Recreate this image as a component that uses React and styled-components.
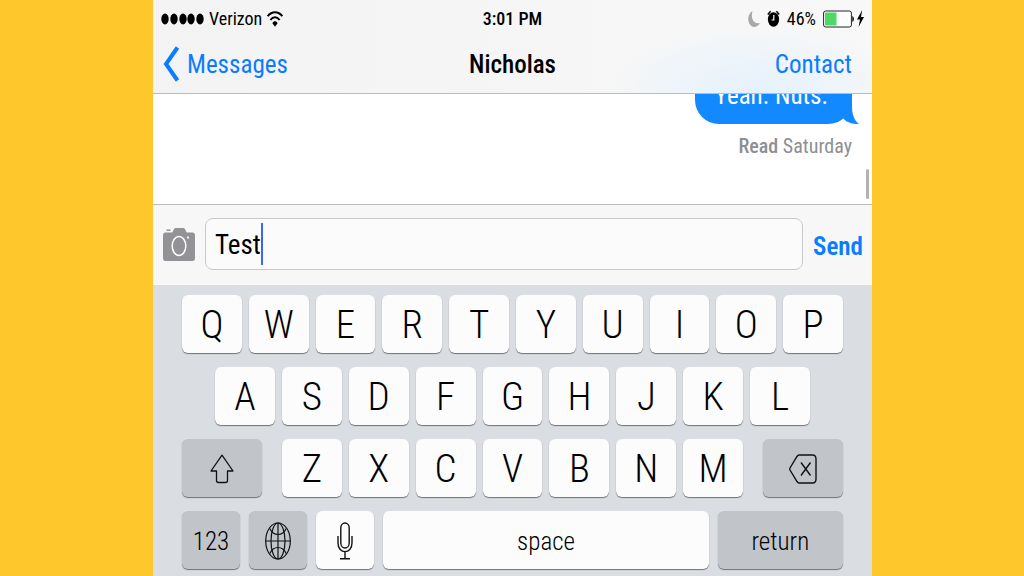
import { useState } from 'react';
import styled, { createGlobalStyle } from 'styled-components';

const ROW_ONE = ['Q', 'W', 'E', 'R', 'T', 'Y', 'U', 'I', 'O', 'P'];
const ROW_TWO = ['A', 'S', 'D', 'F', 'G', 'H', 'J', 'K', 'L'];
const ROW_THREE = ['Z', 'X', 'C', 'V', 'B', 'N', 'M'];

const App = () => {
  const [message, setMessage] = useState('Test');

  const typeLetter = (letter) => setMessage(message + letter);

  return (
    <Page>
      <GlobalStyle />
      <Phone>
        <Header>
          <StatusBar>
            <StatusGroup>
              <SignalDots />
              <span>Verizon</span>
              <WifiIcon />
            </StatusGroup>
            <Clock>3:01 PM</Clock>
            <StatusGroup $end>
              <MoonIcon />
              <AlarmIcon />
              <span>46%</span>
              <Power>
                <BatteryIcon />
                <BoltIcon />
              </Power>
            </StatusGroup>
          </StatusBar>
          <NavBar>
            <BackLink href="#messages">
              <ChevronIcon />
              Messages
            </BackLink>
            <Title>Nicholas</Title>
            <ContactLink href="#contact">Contact</ContactLink>
          </NavBar>
        </Header>

        <MessageList>
          <Bubble>
            Yeah. Nuts.
            <BubbleTail viewBox="0 0 22 24">
              <path d="M0 0H15V6C15 14 17 20 22 24C14 24 9 22 6 18Q3 21 0 22Z" fill="#1289fe" />
            </BubbleTail>
          </Bubble>
          <Receipt>
            <b>Read</b> Saturday
          </Receipt>
          <ScrollThumb />
        </MessageList>

        <Composer onSubmit={(e) => e.preventDefault()}>
          <IconButton type="button" aria-label="Camera">
            <CameraIcon />
          </IconButton>
          <Field>
            <MessageInput
              aria-label="Message"
              value={message}
              onChange={(e) => setMessage(e.target.value)}
            />
            <Caret />
          </Field>
          <SendButton type="submit">Send</SendButton>
        </Composer>

        <Keyboard>
          <KeyRow>
            {ROW_ONE.map((letter) => (
              <Key key={letter} onClick={() => typeLetter(letter)}>
                {letter}
              </Key>
            ))}
          </KeyRow>
          <KeyRow $inset>
            {ROW_TWO.map((letter) => (
              <Key key={letter} onClick={() => typeLetter(letter)}>
                {letter}
              </Key>
            ))}
          </KeyRow>
          <ShiftRow>
            <Key $dark aria-label="Shift">
              <ShiftIcon />
            </Key>
            <KeyRow>
              {ROW_THREE.map((letter) => (
                <Key key={letter} onClick={() => typeLetter(letter)}>
                  {letter}
                </Key>
              ))}
            </KeyRow>
            <Key
              $dark
              aria-label="Delete"
              onClick={() => setMessage(message.slice(0, -1))}
            >
              <DeleteIcon />
            </Key>
          </ShiftRow>
          <BottomRow>
            <Key $dark $small>
              123
            </Key>
            <Key $dark aria-label="Next keyboard">
              <GlobeIcon />
            </Key>
            <Key aria-label="Dictate">
              <MicIcon />
            </Key>
            <Key $small onClick={() => typeLetter(' ')}>
              space
            </Key>
            <Key $dark $small>
              return
            </Key>
          </BottomRow>
        </Keyboard>
      </Phone>
    </Page>
  );
};

const SignalDots = () => (
  <svg width="43" height="12" viewBox="0 0 43 12">
    {[4, 13, 22, 30, 39].map((x) => (
      <ellipse key={x} cx={x} cy="6" rx="3.7" ry="5.4" fill="#000" />
    ))}
  </svg>
);

const WifiIcon = () => (
  <svg width="16" height="16" viewBox="0 0 16 16" fill="none" stroke="#000" strokeWidth="2">
    <path d="M0.7 5.2C4.8 0 11.2 0 15.3 5.2" />
    <path d="M3.4 9C6.1 5.4 9.9 5.4 12.6 9" />
    <path d="M5.4 12.2C6.8 9.6 9.2 9.6 10.6 12.2L8 15.8Z" fill="#000" stroke="none" />
  </svg>
);

const MoonIcon = () => (
  <svg width="12" height="18" viewBox="0 0 12 18">
    <path d="M4.5 1C-1 4 -1 13 3.5 16C6.5 18 10 16.5 12 13C5.5 14.5 2.5 8 4.5 1Z" fill="#a9a9ab" />
  </svg>
);

const AlarmIcon = () => (
  <svg width="13" height="18" viewBox="0 0 13 18">
    <ellipse cx="6.5" cy="9.5" rx="5.6" ry="7.3" fill="#000" />
    <path d="M0.8 4.5L3.6 1.3M12.2 4.5L9.4 1.3" stroke="#000" strokeWidth="1.4" />
    <path d="M6.8 5V10H4.5" fill="none" stroke="#fff" strokeWidth="1.2" />
  </svg>
);

const BatteryIcon = () => (
  <svg width="31" height="18" viewBox="0 0 31 18">
    <rect x="0.6" y="1" width="27.8" height="16" rx="2" fill="#fff" stroke="#222" strokeWidth="1" />
    <rect x="2" y="2.5" width="11.5" height="13" fill="#4cd964" />
    <path d="M29.3 6C31.4 7 31.4 11 29.3 12Z" fill="#000" />
  </svg>
);

const BoltIcon = () => (
  <svg width="7" height="17" viewBox="0 0 7 17">
    <path d="M5.2 0L0 9.5H3L1.6 17L7 7H4Z" fill="#000" />
  </svg>
);

const ChevronIcon = () => (
  <svg width="17" height="36" viewBox="0 0 17 36">
    <path d="M14.5 1.5L3 18L14.5 34.5" fill="none" stroke="#0a7cff" strokeWidth="4" />
  </svg>
);

const CameraIcon = () => (
  <svg width="32" height="34" viewBox="0 0 32 34">
    <path
      d="M2.5 5.5H9C10.5 5 10.5 1 12.5 1H20.5C22.5 1 22.5 5 24 5.5H29.5Q32 5.5 32 8.5V31Q32 34 29.5 34H2.5Q0 34 0 31V8.5Q0 5.5 2.5 5.5Z"
      fill="#929297"
    />
    <path d="M3.5 3.2H7.5" stroke="#929297" strokeWidth="1.5" />
    <ellipse cx="16" cy="19" rx="6.8" ry="9.5" fill="none" stroke="#fff" strokeWidth="1.5" />
    <ellipse cx="25" cy="10.5" rx="0.9" ry="1.2" fill="#fff" />
  </svg>
);

const ShiftIcon = () => (
  <svg width="24" height="30" viewBox="0 0 24 30">
    <path
      d="M12 1.2L23 17H17.5V26.5Q17.5 28.5 15.5 28.5H8.5Q6.5 28.5 6.5 26.5V17H1Z"
      fill="none"
      stroke="#111"
      strokeWidth="1.3"
      strokeLinejoin="round"
    />
  </svg>
);

const DeleteIcon = () => (
  <svg width="28" height="30" viewBox="0 0 28 30" fill="none" stroke="#111" strokeWidth="1.4">
    <path d="M10 1H23.5Q27 1 27 5V25Q27 29 23.5 29H10Q9 29 8 27.5L1 16Q0.5 15 1 14L8 2.5Q9 1 10 1Z" />
    <path d="M12 8.5L21.5 21.5M21.5 8.5L12 21.5" />
  </svg>
);

const GlobeIcon = () => (
  <svg width="26" height="38" viewBox="0 0 26 38" fill="none" stroke="#111" strokeWidth="1.2">
    <ellipse cx="13" cy="19" rx="12.3" ry="18" />
    <ellipse cx="13" cy="19" rx="7" ry="18" />
    <path d="M13 1V37M0.7 19H25.3" />
    <path d="M4.8 6.5C8.5 14.5 17.5 14.5 21.2 6.5" />
    <path d="M4.8 31.5C8.5 23.5 17.5 23.5 21.2 31.5" />
  </svg>
);

const MicIcon = () => (
  <svg width="16" height="38" viewBox="0 0 16 38" fill="none" stroke="#111" strokeWidth="1.4">
    <rect x="3.8" y="1" width="8.4" height="25" rx="4.2" ry="5" />
    <path d="M1 14V21C1 32.5 15 32.5 15 21V14" />
    <path d="M8 29.5V36.5M3 36.8H13" />
  </svg>
);

const GlobalStyle = createGlobalStyle`
  * {
    box-sizing: border-box;
  }

  body {
    margin: 0;
    background-color: #fec72c;
    font-family: 'Roboto Condensed', 'Liberation Sans Narrow', 'Liberation Sans', sans-serif;
  }

  svg {
    display: block;
    flex-shrink: 0;
  }

  button,
  input {
    margin: 0;
    padding: 0;
    border: none;
    background: none;
    font-family: inherit;
  }
`;

const Page = styled.div`
  display: grid;
  grid-template-columns: 153fr 719fr 152fr;
  min-height: 100vh;
  background-color: #fec72c;
`;

const Phone = styled.main`
  display: flex;
  flex-direction: column;
  grid-column: 2;
  min-width: 0;
  background-color: #fff;
`;

const Header = styled.header`
  border-bottom: 1px solid #bcbcbe;
  background: radial-gradient(ellipse 150px 70px at 84% 100%, #e4f1fd, rgba(228, 241, 253, 0)),
    linear-gradient(90deg, #f3f3f3, #f8f8f8);
`;

const StatusBar = styled.div`
  display: grid;
  grid-template-columns: 1fr auto 1fr;
  align-items: center;
  height: 37px;
  padding: 0 8px;
  font-size: 18px;
`;

const StatusGroup = styled.div`
  display: flex;
  align-items: center;
  justify-content: ${({ $end }) => ($end ? 'flex-end' : 'flex-start')};
  gap: ${({ $end }) => ($end ? '7px' : '5px')};
`;

const Power = styled.div`
  display: flex;
  align-items: center;
  gap: 3px;
`;

const Clock = styled.time`
  font-weight: 500;
`;

const NavBar = styled.nav`
  display: grid;
  grid-template-columns: 1fr auto 1fr;
  align-items: center;
  height: 56px;
  padding: 0 10px 2px;
  font-size: 25px;
`;

const BackLink = styled.a`
  display: flex;
  align-items: center;
  gap: 7px;
  color: #0a7cff;
  text-decoration: none;
`;

const Title = styled.h1`
  margin: 0;
  font-size: 25px;
  font-weight: 500;
`;

const ContactLink = styled.a`
  padding-right: 10px;
  color: #0a7cff;
  text-align: right;
  text-decoration: none;
`;

const MessageList = styled.section`
  position: relative;
  display: flex;
  flex-direction: column;
  align-items: flex-end;
  justify-content: flex-end;
  height: 110px;
  padding: 0 20px 45px;
  overflow: hidden;
`;

const Bubble = styled.div`
  position: relative;
  flex-shrink: 0;
  margin-bottom: 9px;
  padding: 14px 24px 12px 20px;
  border-radius: 24px;
  background-color: #1289fe;
  color: #fff;
  font-size: 25px;
  line-height: 32px;
`;

const BubbleTail = styled.svg`
  position: absolute;
  right: -7px;
  bottom: 0;
  width: 22px;
  height: 24px;
`;

const Receipt = styled.p`
  margin: 0;
  color: #8e8e93;
  font-size: 20px;
  line-height: 26px;

  b {
    font-weight: 500;
  }
`;

const ScrollThumb = styled.div`
  position: absolute;
  right: 3px;
  bottom: 5px;
  width: 3px;
  height: 30px;
  border-radius: 2px;
  background-color: #b2b2b2;
`;

const Composer = styled.form`
  display: flex;
  align-items: center;
  gap: 10px;
  height: 81px;
  padding: 0 9px 2px 10px;
  border-top: 1px solid #bcbcbe;
  background-color: #f7f7f7;
`;

const IconButton = styled.button`
  flex-shrink: 0;
`;

const Field = styled.label`
  display: flex;
  flex: 1;
  align-items: center;
  min-width: 0;
  height: 52px;
  padding: 0 9px;
  border: 1px solid #c8c8cc;
  border-radius: 8px;
  background-color: #fbfbfb;
`;

const MessageInput = styled.input`
  field-sizing: content;
  max-width: 100%;
  padding-top: 2px;
  outline: none;
  color: #000;
  caret-color: transparent;
  font-size: 27px;
`;

const Caret = styled.span`
  width: 2px;
  height: 42px;
  background-color: #3c64f0;
`;

const SendButton = styled.button`
  padding-top: 4px;
  color: #0a7cff;
  font-size: 25px;
  font-weight: 600;
`;

const Keyboard = styled.section`
  display: flex;
  flex: 1;
  flex-direction: column;
  gap: 14px;
  padding: 10px 29px 7px;
  background-color: #dadde2;
`;

const KeyRow = styled.div`
  display: flex;
  gap: 7px;
  padding: 0 ${({ $inset }) => ($inset ? '33px' : '0')};
`;

const ShiftRow = styled.div`
  display: grid;
  grid-template-columns: 80fr 461fr 80fr;
  gap: 20px;
`;

const BottomRow = styled.div`
  display: grid;
  grid-template-columns: 58fr 58fr 58fr 325fr 125fr;
  gap: 9px;
`;

const Key = styled.button.attrs({ type: 'button' })`
  display: flex;
  flex: 1;
  align-items: center;
  justify-content: center;
  min-width: 0;
  height: 58px;
  padding-top: 2px;
  border-radius: 6px;
  background-color: ${({ $dark }) => ($dark ? '#c1c5ca' : '#fcfcfc')};
  box-shadow: 0 1px 1px #707276;
  color: #000;
  font-size: ${({ $small }) => ($small ? '25px' : '39px')};
  font-weight: 300;
`;

export default App;
